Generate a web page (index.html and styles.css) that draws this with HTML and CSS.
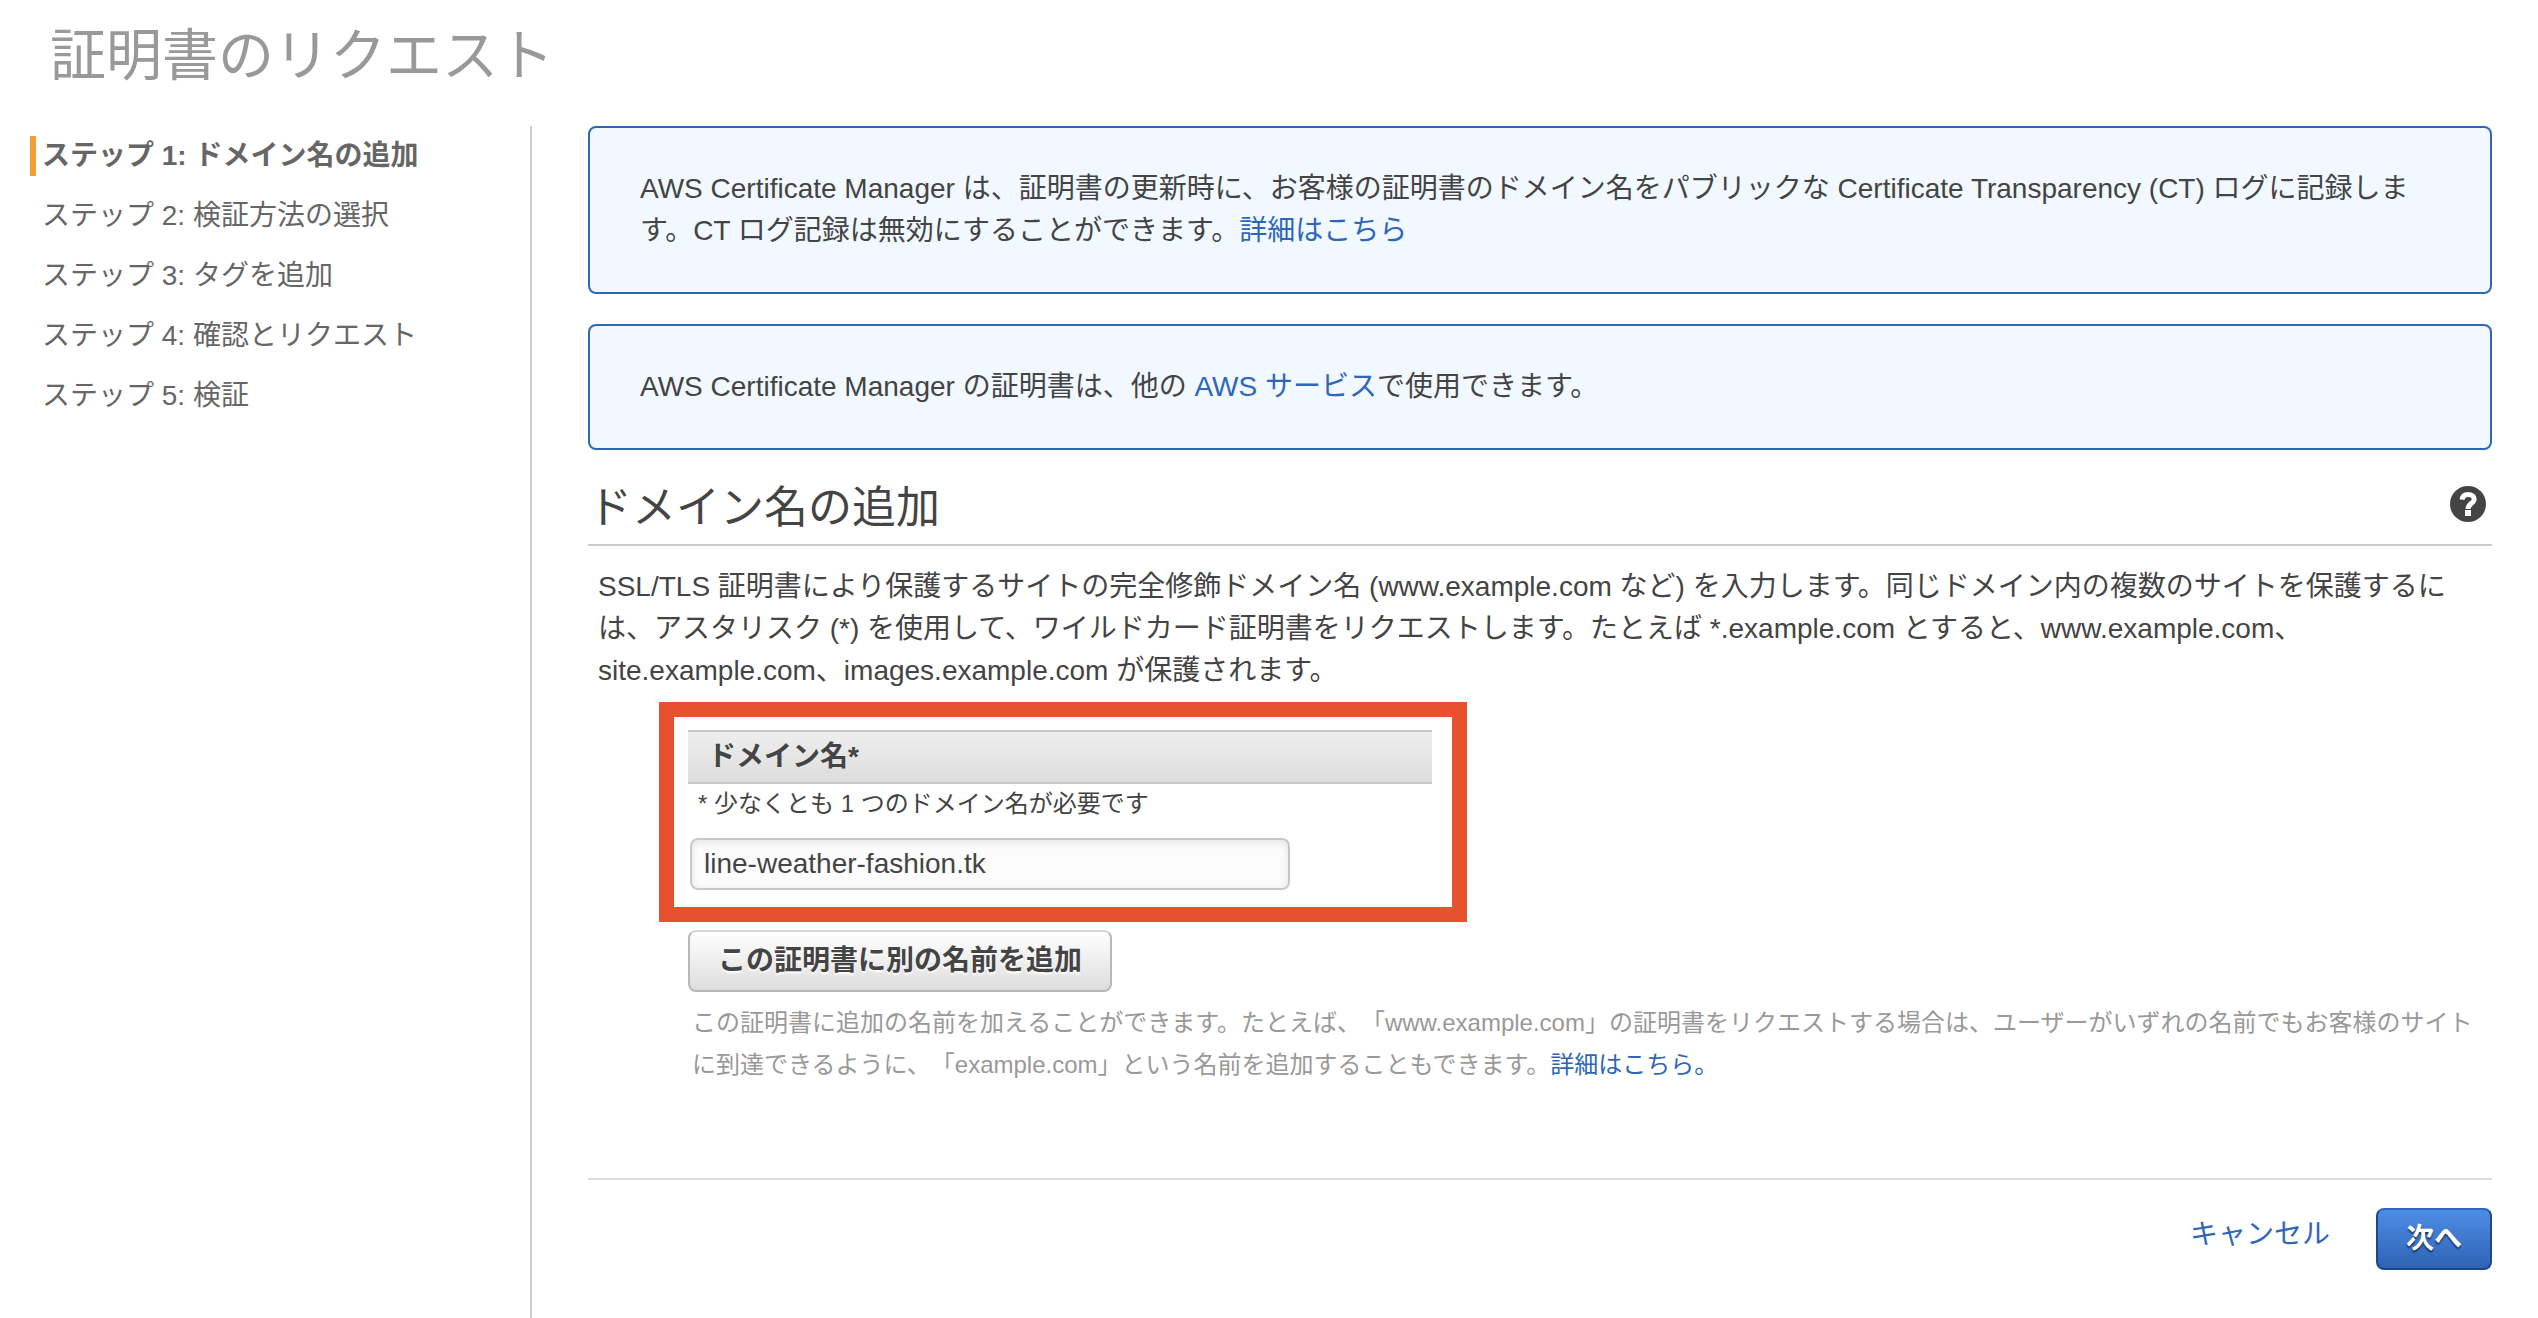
FILE: index.html
```html
<!DOCTYPE html>
<html lang="ja">
<head>
    <meta charset="UTF-8">
    <meta name="viewport" content="width=device-width, initial-scale=1.0">
    <title>証明書のリクエスト</title>
    <link rel="stylesheet" href="styles.css">
</head>
<body>
    <h1 class="page-title">証明書のリクエスト</h1>

    <div class="wizard">
        <nav class="steps">
            <ol>
                <li class="active">ステップ 1: ドメイン名の追加</li>
                <li>ステップ 2: 検証方法の選択</li>
                <li>ステップ 3: タグを追加</li>
                <li>ステップ 4: 確認とリクエスト</li>
                <li>ステップ 5: 検証</li>
            </ol>
        </nav>

        <main class="content">
            <div class="info">
                <p>AWS Certificate Manager は、証明書の更新時に、お客様の証明書のドメイン名をパブリックな Certificate Transparency (CT) ログに記録します。CT ログ記録は無効にすることができます。<a href="#">詳細はこちら</a></p>
            </div>
            <div class="info">
                <p>AWS Certificate Manager の証明書は、他の <a href="#">AWS サービス</a>で使用できます。</p>
            </div>

            <div class="section-header">
                <h2>ドメイン名の追加</h2>
                <button type="button" class="help-button" aria-label="ヘルプ">
                    <svg viewBox="0 0 36 36" width="36" height="36">
                        <circle cx="18" cy="18" r="18" fill="#444"/>
                        <path d="M12 13.6C12.6 10 15 8.6 18 8.6C21.6 8.6 24.2 10.2 24.2 13.2C24.2 17.4 18 17.4 18 23" fill="none" stroke="#fff" stroke-width="5"/>
                        <rect x="15" y="24" width="6" height="6" fill="#fff"/>
                    </svg>
                </button>
            </div>
            <p class="description">SSL/TLS 証明書により保護するサイトの完全修飾ドメイン名 (www.example.com など) を入力します。同じドメイン内の複数のサイトを保護するには、アスタリスク (*) を使用して、ワイルドカード証明書をリクエストします。たとえば *.example.com とすると、www.example.com、site.example.com、images.example.com が保護されます。</p>

            <form class="domain-form">
                <div class="highlight">
                    <label class="field-header" for="domain">ドメイン名*</label>
                    <p class="field-note">* 少なくとも 1 つのドメイン名が必要です</p>
                    <input type="text" id="domain" name="domain" value="line-weather-fashion.tk">
                </div>
                <button type="button" class="button add-button">この証明書に別の名前を追加</button>
                <p class="hint">この証明書に追加の名前を加えることができます。たとえば、「www.example.com」の証明書をリクエストする場合は、ユーザーがいずれの名前でもお客様のサイトに到達できるように、「example.com」という名前を追加することもできます。<a href="#">詳細はこちら。</a></p>
            </form>

            <div class="actions">
                <a href="#">キャンセル</a>
                <button type="button" class="button next-button">次へ</button>
            </div>
        </main>
    </div>
</body>
</html>
```
FILE: styles.css
```css
* {
    box-sizing: border-box;
}
body {
    font-family: "Liberation Sans", "Noto Sans CJK JP", sans-serif;
    font-size: 28px;
    line-height: 42px;
    color: #444;
    background-color: #fff;
    margin: 0;
    min-height: 100vh;
    display: flex;
    flex-direction: column;
    text-spacing-trim: space-all;
}
h1, h2, p, ol {
    margin: 0;
    padding: 0;
    font-weight: normal;
}
a {
    color: #2e66b9;
    text-decoration: none;
}
.page-title {
    font-size: 56px;
    line-height: 84px;
    color: #999;
    padding: 14px 50px 28px;
}
.wizard {
    flex: 1;
    display: flex;
}

/* Steps */
.steps {
    width: 532px;
    padding: 10px 30px;
    border-right: 2px solid #ccc;
    color: #666;
}
.steps ol {
    list-style: none;
    display: grid;
    gap: 20px;
}
.steps li {
    line-height: 40px;
    padding-left: 6px;
    border-left: 6px solid transparent;
}
.steps .active {
    font-weight: bold;
    border-left-color: #f19f38;
}

/* Content */
.content {
    flex: 1;
    padding: 0 46px 48px 56px;
}
.info {
    background-color: #f1f8ff;
    border: 2px solid #2e66b9;
    border-radius: 8px;
    padding: 40px 50px;
    margin-bottom: 30px;
}
.section-header {
    display: flex;
    justify-content: space-between;
    align-items: flex-start;
    padding: 0 6px 6px 0;
    margin-top: -2px;
    border-bottom: 2px solid #ccc;
}
.section-header h2 {
    font-size: 44px;
    line-height: 60px;
}
.help-button {
    display: flex;
    padding: 8px 0 0;
    border: none;
    background: none;
    cursor: pointer;
}
.description {
    padding: 20px 10px 10px;
}

/* Domain form */
.domain-form {
    padding: 0 4px 82px 100px;
}
.highlight {
    width: 808px;
    margin-left: -29px;
    padding: 13px 20px 17px 14px;
    border: 15px solid #e8512e;
}
.field-header {
    display: block;
    font-weight: bold;
    line-height: 50px;
    padding: 0 20px;
    background: linear-gradient(#eee, #ddd);
    border-top: 2px solid #c8c8c8;
    border-bottom: 2px solid #c8c8c8;
}
.field-note {
    font-size: 24px;
    line-height: 40px;
    padding: 0 10px 14px;
}
.highlight input {
    display: block;
    width: 600px;
    height: 52px;
    margin-left: 2px;
    padding: 0 12px;
    font: inherit;
    color: #444;
    background-color: #fcfcfc;
    border: 2px solid #c8c8c8;
    border-radius: 8px;
    box-shadow: inset 0 2px 8px rgba(0, 0, 0, 0.1);
}
.button {
    height: 62px;
    padding: 0 28px;
    font: inherit;
    font-weight: bold;
    border-radius: 8px;
    cursor: pointer;
}
.add-button {
    display: block;
    margin-top: 8px;
    color: #444;
    background: linear-gradient(#fff, #ddd);
    border: 2px solid #b8b8b8;
    border-top-color: #d8d8d8;
    text-shadow: 0 2px 2px #fff;
}
.hint {
    font-size: 24px;
    color: #999;
    padding: 10px 4px;
}

/* Footer buttons */
.actions {
    display: flex;
    justify-content: flex-end;
    gap: 46px;
    padding-top: 28px;
    border-top: 2px solid #ddd;
}
.actions a {
    padding-top: 6px;
}
.next-button {
    color: #fff;
    background: linear-gradient(#4e8de6, #2e63b5);
    border: 2px solid #1f4787;
    border-top-color: #2e66b9;
    text-shadow: 0 2px 2px rgba(0, 0, 0, 0.6);
}
```
